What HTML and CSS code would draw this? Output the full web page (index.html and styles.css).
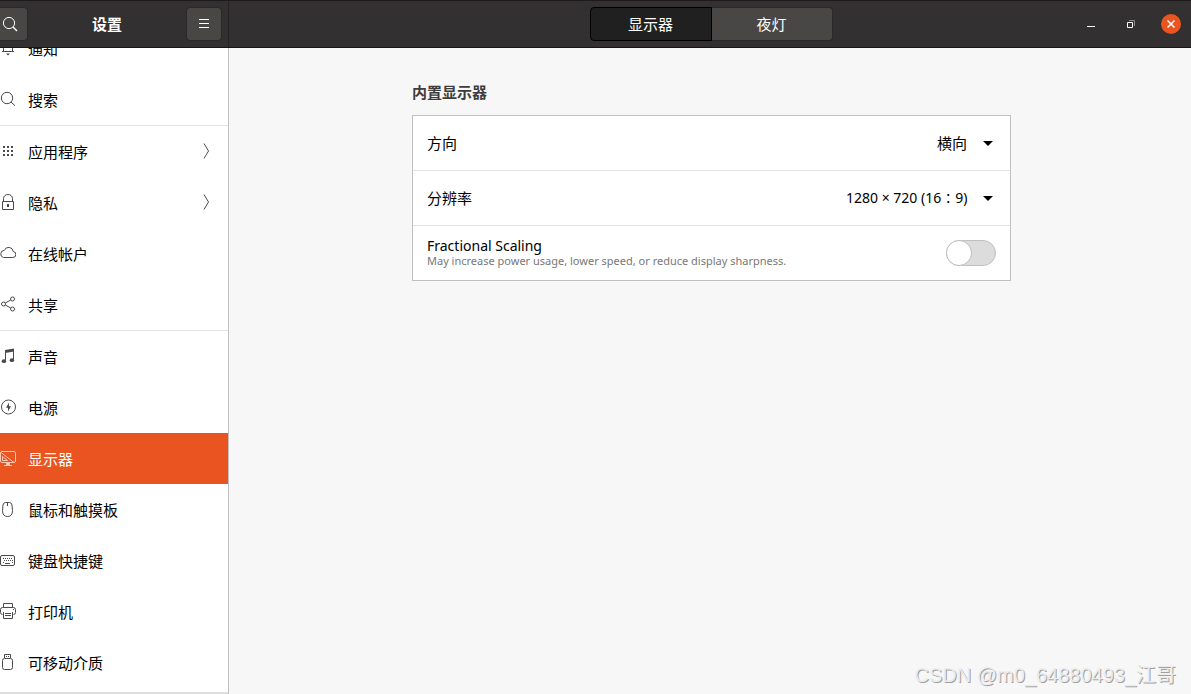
FILE: index.html
```html
<!DOCTYPE html>
<html lang="zh-CN">
<head>
<meta charset="utf-8">
<title>设置</title>
<link rel="stylesheet" href="styles.css">
</head>
<body>
<div class="window">
  <header class="titlebar">
    <div class="titlebar-side">
      <button class="tool-button search-button" type="button" aria-label="搜索">
        <svg class="icon" viewBox="0 0 16 16"><circle cx="7" cy="7" r="5.6"/><path d="M11 11l4 4" stroke-width="1.5"/></svg>
      </button>
      <h1 class="title">设置</h1>
      <button class="tool-button" type="button" aria-label="菜单">
        <svg class="icon" viewBox="0 0 16 16"><path d="M3 3.5h10M3 7.5h10M3 11.5h10"/></svg>
      </button>
    </div>
    <div class="titlebar-main">
      <div class="tabs">
        <button class="tab tab-active" type="button">显示器</button>
        <button class="tab" type="button">夜灯</button>
      </div>
      <div class="controls">
        <button class="control" type="button" aria-label="最小化"><svg class="icon" viewBox="0 0 16 16"><path d="M4 10.5h8"/></svg></button>
        <button class="control" type="button" aria-label="还原"><svg class="icon" viewBox="0 0 16 16"><path d="M6 4.500h5.500V10" stroke="#8f8e8e"/><path d="M4.500 6.500h5v5h-5z"/></svg></button>
        <button class="control control-close" type="button" aria-label="关闭"><svg class="icon" viewBox="0 0 16 16"><path d="M4.500 4.500l7 7M11.500 4.500l-7 7" stroke-width="1.5"/></svg></button>
      </div>
    </div>
  </header>
  <div class="content">
    <nav class="sidebar">
      <ul class="nav-list">
        <li><a class="nav-item" href="#"><svg class="icon" viewBox="0 0 16 16"><path d="M3.500 11.500V7a4.500 4.500 0 0 1 9 0v4.500M2 11.500h12"/><path d="M6 13.500h4L8 15.500z" fill="currentColor" stroke="none"/></svg><span>通知</span></a></li>
        <li class="group-end"><a class="nav-item" href="#"><svg class="icon" viewBox="0 0 16 16"><circle cx="7" cy="7" r="5.700"/><path d="M11 11l4 3.700"/></svg><span>搜索</span></a></li>
        <li><a class="nav-item" href="#"><svg class="icon" viewBox="0 0 16 16"><path d="M3 4h2M7 4h2M11 4h2M3 8h2M7 8h2M11 8h2M3 12h2M7 12h2M11 12h2" stroke-width="2"/></svg><span>应用程序</span><svg class="icon chevron" viewBox="0 0 16 16"><path d="M6 .5l4.500 7.500L6 15.500"/></svg></a></li>
        <li><a class="nav-item" href="#"><svg class="icon" viewBox="0 0 16 16"><path d="M2.500 7.500h11v8h-11zM3.500 7.500V4.500a4.500 4 0 0 1 9 0v3"/><path d="M8 10v3" stroke-width="2"/></svg><span>隐私</span><svg class="icon chevron" viewBox="0 0 16 16"><path d="M6 .5l4.500 7.500L6 15.500"/></svg></a></li>
        <li><a class="nav-item" href="#"><svg class="icon" viewBox="0 0 16 16"><path d="M3.500 12.500h9a3 3 0 0 0 .7-6A4.600 4.600 0 0 0 4.300 5.400 3.600 3.600 0 0 0 3.500 12.500z"/></svg><span>在线帐户</span></a></li>
        <li class="group-end"><a class="nav-item" href="#"><svg class="icon" viewBox="0 0 16 16"><circle cx="3.500" cy="8" r="2"/><circle cx="12.500" cy="3" r="2"/><circle cx="12.500" cy="13" r="2"/><path d="M5.300 7l5.400-3M5.300 9l5.400 3"/></svg><span>共享</span></a></li>
        <li><a class="nav-item" href="#"><svg class="icon" viewBox="0 0 16 16"><path d="M5 2l9-1.500v3L5 5z" fill="currentColor" stroke="none"/><path d="M5.500 3v10M13.500 2v10"/><ellipse cx="3.900" cy="13.200" rx="2.200" ry="1.900" fill="currentColor" stroke="none"/><ellipse cx="11.900" cy="12.200" rx="2.200" ry="1.900" fill="currentColor" stroke="none"/></svg><span>声音</span></a></li>
        <li><a class="nav-item" href="#"><svg class="icon" viewBox="0 0 16 16"><circle cx="8.500" cy="8" r="7"/><path d="M9 3.500L6 8.700h2V12.500l3-5.200H9z" fill="currentColor" stroke="none"/></svg><span>电源</span></a></li>
        <li><a class="nav-item nav-selected" href="#" aria-current="page"><svg class="icon" viewBox="0 0 16 16"><rect x=".5" y="1.500" width="15" height="11" rx="1.500"/><path d="M1 2.500l13 10M2.500 6.500v4h5z"/><path d="M6 13h4v2h2v1H4v-1h2z" fill="currentColor" stroke="none"/></svg><span>显示器</span></a></li>
        <li><a class="nav-item" href="#"><svg class="icon" viewBox="0 0 16 16"><path d="M5.500 1.500h4q2 0 2.500 2.500l.5 5.500q0 6-5 6t-5-6L3 4q.5-2.500 2.500-2.500zM7.500 1.500V5"/></svg><span>鼠标和触摸板</span></a></li>
        <li><a class="nav-item" href="#"><svg class="icon" viewBox="0 0 16 16"><rect x=".5" y="3.500" width="14" height="10" rx="1.500"/><path d="M3 6.500h10M4 8.500h9" stroke-dasharray="1 1"/><path d="M3 10.500h1M5 11.500h5M12 10.500h1"/></svg><span>键盘快捷键</span></a></li>
        <li><a class="nav-item" href="#"><svg class="icon" viewBox="0 0 16 16"><path d="M3.500 4.500v-4h9v4M2.500 11.500q-2 0-2-2v-3q0-2 2-2h11q2 0 2 2v3q0 2-2 2M3.500 9v6.500h9V9M5 10.500h6M5 12.500h6M13 6.500h1"/></svg><span>打印机</span></a></li>
        <li><a class="nav-item" href="#"><svg class="icon" viewBox="0 0 16 16"><path d="M4.500 4V.500h6V4M6 2.500h1M8 2.500h1"/><rect x="2.500" y="4.500" width="10" height="11" rx="2"/></svg><span>可移动介质</span></a></li>
      </ul>
    </nav>
    <main class="panel">
      <section class="section">
        <h2 class="section-title">内置显示器</h2>
        <div class="card">
          <div class="setting">
            <label for="orientation">方向</label>
            <span class="dropdown"><select class="select" id="orientation"><option>横向</option></select><svg class="arrow" viewBox="0 0 10 5"><path d="M0 0h10L5 5z"/></svg></span>
          </div>
          <div class="setting">
            <label for="resolution">分辨率</label>
            <span class="dropdown"><select class="select select-latin" id="resolution"><option>1280 × 720 (16∶9)</option></select><svg class="arrow" viewBox="0 0 10 5"><path d="M0 0h10L5 5z"/></svg></span>
          </div>
          <div class="setting">
            <label class="scaling" for="scaling"><span class="scaling-title">Fractional Scaling</span><span class="hint">May increase power usage, lower speed, or reduce display sharpness.</span></label>
            <input class="switch" type="checkbox" role="switch" id="scaling">
          </div>
        </div>
      </section>
    </main>
  </div>
  <div class="watermark">CSDN @m0_64880493_江哥</div>
</div>
</body>
</html>
```

FILE: styles.css
```css
*, *::before { box-sizing: border-box; }

body {
  margin: 0;
  color: #000;
  font: 15px/22px "Noto Sans", "Noto Sans CJK SC", sans-serif;
}

button, select { font: inherit; }

.window {
  position: relative;
  display: flex;
  flex-direction: column;
  height: 100vh;
  overflow: hidden;
}

.icon {
  flex: none;
  width: 16px;
  height: 16px;
  fill: none;
  stroke: currentColor;
  stroke-width: 1;
}

.titlebar {
  display: flex;
  flex: none;
  height: 48px;
  background: #323031;
  border-top: 1px solid #1e1a1c;
  border-bottom: 1px solid #1b1319;
  color: #fff;
}

.titlebar-side {
  display: flex;
  align-items: center;
  justify-content: space-between;
  width: 229px;
  padding-right: 6px;
  border-right: 1px solid #232122;
}

.title {
  margin: 0;
  font-size: 15px;
  line-height: 22px;
}

.tool-button {
  display: flex;
  align-items: center;
  justify-content: center;
  width: 36px;
  height: 34px;
  padding: 0;
  background: #484745;
  border: 1px solid #2a2829;
  border-radius: 4px;
  color: #fff;
}

.search-button { margin-left: -8px; }

.titlebar-main {
  display: grid;
  flex: 1;
  grid-template-columns: 1fr auto 1fr;
  align-items: center;
  padding: 0 10px 0 12px;
}

.tabs {
  display: grid;
  grid-column: 2;
  grid-template-columns: 122px 121px;
}

.tab {
  height: 34px;
  padding: 0;
  background: #484745;
  border: 1px solid #2a2829;
  border-left: 0;
  border-radius: 0 4px 4px 0;
  color: #fff;
}

.tab-active {
  background: #202020;
  border: 1px solid #000;
  border-radius: 4px 0 0 4px;
}

.controls {
  display: flex;
  justify-content: flex-end;
  gap: 20px;
}

.control {
  display: flex;
  align-items: center;
  justify-content: center;
  width: 20px;
  height: 20px;
  padding: 0;
  background: none;
  border: 0;
  border-radius: 50%;
  color: #fff;
}

.control-close { background: #e95420; }

.content {
  display: flex;
  flex: 1;
  min-height: 0;
}

.sidebar {
  flex: none;
  width: 229px;
  overflow: hidden;
  background: #fff;
  border-right: 1px solid #c0c0c0;
}

.nav-list {
  margin: -25px 0 0;
  padding: 0 0 4px;
  border-bottom: 2px solid #dedede;
  list-style: none;
}

.group-end { border-bottom: 1px solid #e2e2e2; }

.nav-item {
  display: flex;
  align-items: center;
  gap: 12px;
  height: 51px;
  color: #000;
  text-decoration: none;
}

.nav-item .icon {
  margin-bottom: 2px;
  color: #4a4a4a;
}

.nav-item .chevron {
  margin-right: 14px;
  margin-left: auto;
}

.nav-selected {
  background: #e95420;
  color: #fff;
}

.nav-selected .icon { color: #fbc5b0; }

.panel {
  flex: 1;
  padding: 33px 24px 0 27px;
  background: #f7f7f7;
}

.section {
  max-width: 599px;
  margin: 0 auto;
}

.section-title {
  margin: 0 0 12px;
  color: #3d3d3d;
  font-size: 15px;
  line-height: 22px;
}

.card {
  background: #fff;
  border: 1px solid #c0c0c0;
}

.setting {
  display: flex;
  align-items: center;
  justify-content: space-between;
  height: 54px;
  padding: 0 14px;
}

.setting + .setting {
  height: 55px;
  border-top: 1px solid #e2e2e2;
}

.dropdown {
  position: relative;
  display: flex;
  align-items: center;
}

.select {
  padding: 0 28px 0 0;
  appearance: none;
  background: none;
  border: 0;
  color: #000;
}

.select-latin { font-size: 14px; }

.arrow {
  position: absolute;
  right: 3px;
  width: 10px;
  height: 5px;
  pointer-events: none;
}

.scaling {
  display: flex;
  flex-direction: column;
}

.scaling-title {
  font-size: 14px;
  line-height: 16px;
}

.hint {
  color: #787878;
  font-size: 11px;
  line-height: 14px;
}

.switch {
  width: 50px;
  height: 26px;
  margin: 0;
  appearance: none;
  background: #dcdcdc;
  border: 1px solid #c0c0c0;
  border-radius: 13px;
}

.switch::before {
  display: block;
  width: 26px;
  height: 26px;
  margin: -1px;
  background: #fff;
  border: 1px solid #c0c0c0;
  border-radius: 50%;
  content: "";
}

.switch:checked { background: #e95420; }

.switch:checked::before { margin-left: 23px; }

.watermark {
  position: absolute;
  right: 15px;
  bottom: 6px;
  color: #ececec;
  font: 20px/26px "Liberation Sans", "Noto Sans CJK SC", sans-serif;
  text-shadow: 1px 1px 0 #a0a0a0;
  pointer-events: none;
}
```
